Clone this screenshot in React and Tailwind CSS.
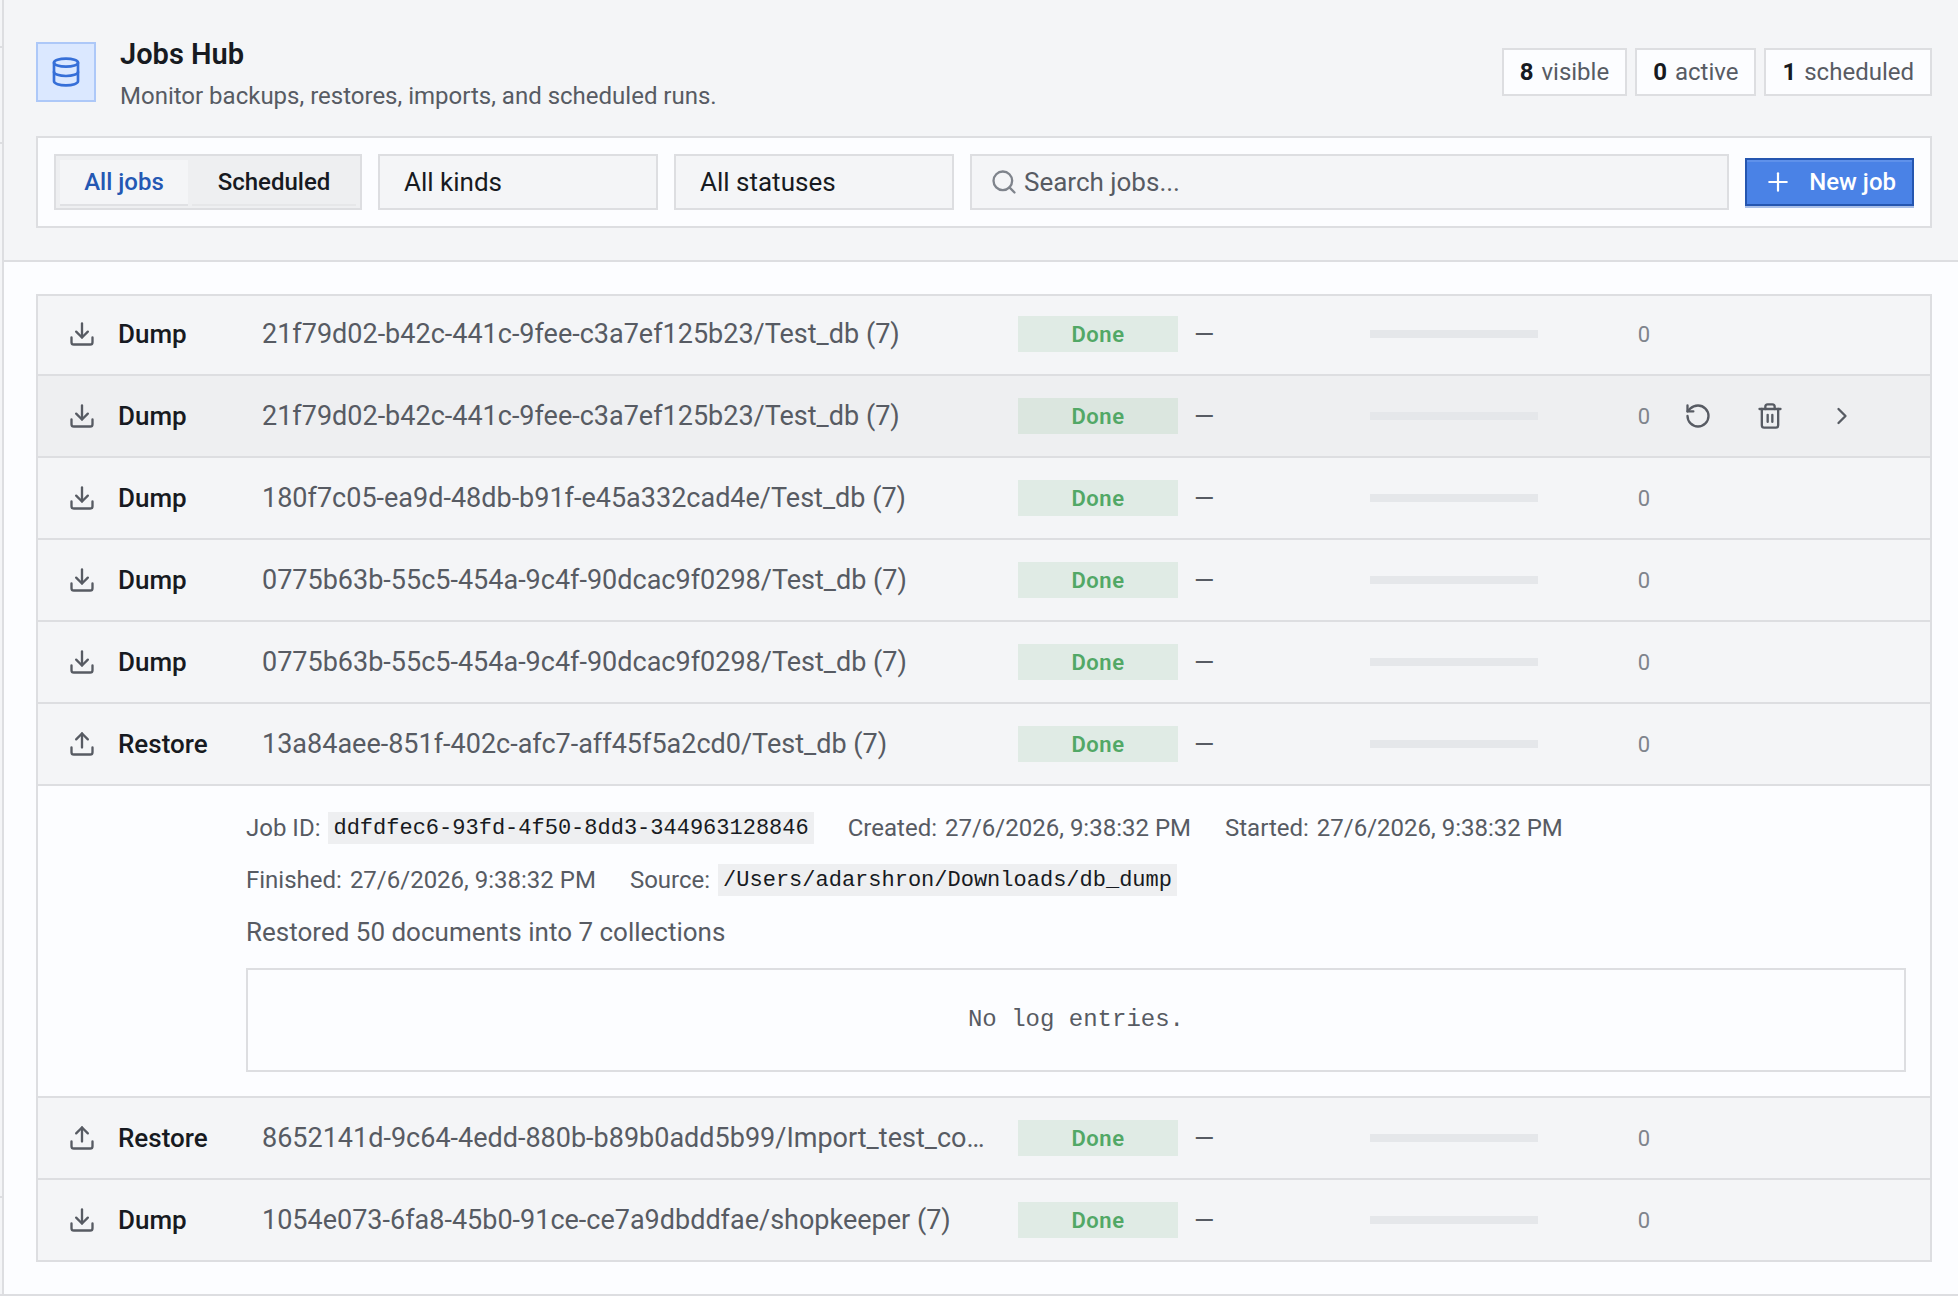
import { useState } from "react";
import {
  ChevronRight,
  Database,
  Download,
  Plus,
  RotateCcw,
  Search,
  Trash2,
  Upload,
} from "lucide-react";

const jobs = [
  { id: 1, kind: "Dump", target: "21f79d02-b42c-441c-9fee-c3a7ef125b23/Test_db (7)" },
  { id: 2, kind: "Dump", target: "21f79d02-b42c-441c-9fee-c3a7ef125b23/Test_db (7)", hovered: true },
  { id: 3, kind: "Dump", target: "180f7c05-ea9d-48db-b91f-e45a332cad4e/Test_db (7)" },
  { id: 4, kind: "Dump", target: "0775b63b-55c5-454a-9c4f-90dcac9f0298/Test_db (7)" },
  { id: 5, kind: "Dump", target: "0775b63b-55c5-454a-9c4f-90dcac9f0298/Test_db (7)" },
  {
    id: 6,
    kind: "Restore",
    target: "13a84aee-851f-402c-afc7-aff45f5a2cd0/Test_db (7)",
    details: {
      jobId: "ddfdfec6-93fd-4f50-8dd3-344963128846",
      created: "27/6/2026, 9:38:32 PM",
      started: "27/6/2026, 9:38:32 PM",
      finished: "27/6/2026, 9:38:32 PM",
      source: "/Users/adarshron/Downloads/db_dump",
      summary: "Restored 50 documents into 7 collections",
    },
  },
  { id: 7, kind: "Restore", target: "8652141d-9c64-4edd-880b-b89b0add5b99/Import_test_co…" },
  { id: 8, kind: "Dump", target: "1054e073-6fa8-45b0-91ce-ce7a9dbddfae/shopkeeper (7)" },
];

function Stat({ value, label }) {
  return (
    <div className="flex h-12 items-center gap-2 border-2 border-[#dddee1] bg-[#fcfdff] px-4 text-[24px] text-[#575b63]">
      <strong className="font-bold text-[#171a21]">{value}</strong>
      <span>{label}</span>
    </div>
  );
}

function Tab({ active, children, onClick }) {
  return (
    <button
      type="button"
      aria-pressed={active}
      onClick={onClick}
      className={
        active
          ? "h-11 min-w-32 bg-[#f4f5f7] px-6 font-medium text-[#2458b3] shadow-[0_2px_0_#e0e1e4]"
          : "h-11 min-w-41 px-6 font-medium text-[#171a21] shadow-[0_2px_0_#e6e7e9]"
      }
    >
      {children}
    </button>
  );
}

function Filter({ label, options }) {
  return (
    <select
      aria-label={label}
      className="h-14 w-70 appearance-none border-2 border-[#dddee1] bg-[#f4f5f7] px-6 text-[26px] text-[#171a21]"
    >
      {options.map((option) => (
        <option key={option}>{option}</option>
      ))}
    </select>
  );
}

function IconButton({ label, icon: Icon }) {
  return (
    <button type="button" aria-label={label} className="flex h-14 w-16 items-center justify-center text-[#575b63]">
      <Icon size={28} strokeWidth={2} />
    </button>
  );
}

function Code({ children }) {
  return (
    <code className="flex h-8 items-center bg-[#eeeff1] px-[5px] font-['Liberation_Mono',monospace] text-[22px] text-[#171a21]">
      {children}
    </code>
  );
}

function Meta({ label, children }) {
  return (
    <div className="flex h-8 items-center gap-2">
      <dt>{label}:</dt>
      <dd>{children}</dd>
    </div>
  );
}

function JobDetails({ details }) {
  return (
    <div className="border-t-2 border-[#dddee1] bg-[#fcfdff] pt-[26px] pr-6 pb-6 pl-52 text-[#575b63]">
      <dl className="flex max-w-[1400px] flex-wrap gap-x-[34px] gap-y-5 text-[24px]">
        <Meta label="Job ID">
          <Code>{details.jobId}</Code>
        </Meta>
        <Meta label="Created">{details.created}</Meta>
        <Meta label="Started">{details.started}</Meta>
        <Meta label="Finished">{details.finished}</Meta>
        <Meta label="Source">
          <Code>{details.source}</Code>
        </Meta>
      </dl>
      <p className="mt-4 text-[26px] leading-[40px]">{details.summary}</p>
      <div className="mt-4 flex h-[104px] items-center justify-center border-2 border-[#dddee1] font-['Liberation_Mono',monospace] text-[24px]">
        No log entries.
      </div>
    </div>
  );
}

function JobRow({ job }) {
  const KindIcon = job.kind === "Dump" ? Download : Upload;
  return (
    <li className="group border-t-2 border-[#dddee1] first:border-t-0">
      <div
        className={
          "grid h-20 grid-cols-[40px_128px_minmax(0,1fr)_160px_160px_168px_96px_240px] items-center gap-x-4 px-6 group-first:h-[78px] group-first:pb-0.5 " +
          (job.hovered ? "bg-[#eeeff1]" : "bg-[#f4f5f7]")
        }
      >
        <KindIcon size={28} strokeWidth={2} className="justify-self-center text-[#575b63]" />
        <span className="text-[26px] font-medium text-[#171a21]">{job.kind}</span>
        <span className="truncate text-[27px] text-[#575b63]">{job.target}</span>
        <span className="flex h-9 items-center justify-center bg-[#52a866]/12 text-[22px] font-semibold tracking-wide text-[#52a866]">
          Done
        </span>
        <span className="text-[26px] text-[#575b63]">—</span>
        <div role="progressbar" aria-label="Progress" aria-valuenow={0} className="h-2 bg-[#e5e7ea]" />
        <span className="text-right text-[22px] text-[#7f848c]">0</span>
        {job.hovered && (
          <div className="flex gap-2">
            <IconButton label="Run again" icon={RotateCcw} />
            <IconButton label="Delete" icon={Trash2} />
            <IconButton label="Expand" icon={ChevronRight} />
          </div>
        )}
      </div>
      {job.details && <JobDetails details={job.details} />}
    </li>
  );
}

export default function App() {
  const [tab, setTab] = useState("all");
  return (
    <div className="flex min-h-screen flex-col bg-[#fcfdff] font-['Roboto',sans-serif]">
      <div className="flex flex-1">
        <aside className="flex w-1 shrink-0 flex-col border-r-2 border-[#dddee1] bg-[#f4f5f7]">
          <div className="h-12 border-b-2 border-[#dddee1]" />
          <div className="h-24 border-b-2 border-[#dddee1]" />
          <div className="flex-1 border-b-2 border-[#dddee1]" />
          <div className="h-24" />
        </aside>

        <main className="min-w-0 flex-1">
          <header className="border-b-2 border-[#dddee1] bg-[#f4f5f7] pt-8 pr-[26px] pb-8 pl-8">
            <div className="flex items-center gap-6">
              <div className="flex size-15 items-center justify-center border-2 border-[#adc8f8] bg-[#dbe8ff] text-[#366fd8]">
                <Database size={32} strokeWidth={2} />
              </div>
              <div className="flex-1">
                <h1 className="text-[29px] leading-[44px] font-semibold text-[#171a21]">Jobs Hub</h1>
                <p className="mt-1 text-[24px] leading-[32px] text-[#575b63]">
                  Monitor backups, restores, imports, and scheduled runs.
                </p>
              </div>
              <div className="flex gap-2">
                <Stat value="8" label="visible" />
                <Stat value="0" label="active" />
                <Stat value="1" label="scheduled" />
              </div>
            </div>

            <div className="mt-6 flex items-center gap-4 border-2 border-[#dddee1] bg-[#fcfdff] p-4">
              <div className="flex h-14 gap-1 border-2 border-[#dddee1] bg-[#eeeff1] p-1 text-[24px]">
                <Tab active={tab === "all"} onClick={() => setTab("all")}>
                  All jobs
                </Tab>
                <Tab active={tab === "scheduled"} onClick={() => setTab("scheduled")}>
                  Scheduled
                </Tab>
              </div>
              <Filter label="Kind" options={["All kinds", "Dump", "Restore"]} />
              <Filter label="Status" options={["All statuses", "Done"]} />
              <label className="flex h-14 min-w-0 flex-1 items-center gap-[6px] border-2 border-[#dddee1] bg-[#f4f5f7] px-[18px]">
                <Search size={28} strokeWidth={2} className="shrink-0 text-[#7f848c]" />
                <input
                  type="text"
                  aria-label="Search jobs"
                  placeholder="Search jobs..."
                  className="min-w-0 flex-1 bg-transparent text-[26px] text-[#171a21] outline-none placeholder:text-[#575b63]"
                />
              </label>
              <button
                type="button"
                className="flex h-12 items-center gap-4 border-2 border-[#2556b0] bg-[#4a82e6] px-4 text-[24px] font-medium text-white shadow-[inset_0_2px_0_#5f91ea,0_2px_0_#a9bfe8]"
              >
                <Plus size={30} strokeWidth={1.75} />
                New job
              </button>
            </div>
          </header>

          <ul className="my-8 mr-[26px] ml-8 border-2 border-[#dddee1]">
            {jobs.map((job) => (
              <JobRow key={job.id} job={job} />
            ))}
          </ul>
        </main>
      </div>
      <footer className="h-0.5 bg-[#dddee1]" />
    </div>
  );
}
